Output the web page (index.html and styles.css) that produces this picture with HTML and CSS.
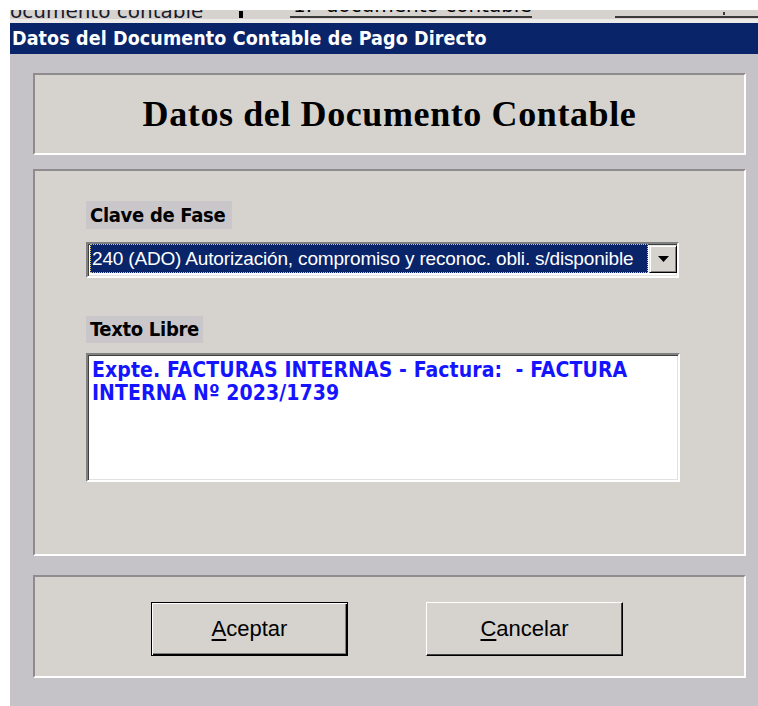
FILE: index.html
```html
<!DOCTYPE html>
<html lang="es">
<head>
<meta charset="utf-8">
<title>Datos del Documento Contable de Pago Directo</title>
<link rel="stylesheet" href="styles.css">
</head>
<body>
<div class="screen">
  <div class="backdrop">
    <div class="back-row">
      <span class="back-text">ocumento contable</span>
      <span class="back-mark"></span>
      <span class="back-field"><span class="back-field-text">1.- documento contable</span></span>
      <span class="back-field back-field-wide"><span class="back-tick"></span></span>
    </div>
  </div>

  <div class="dialog">
    <div class="titlebar">Datos del Documento Contable de Pago Directo</div>

    <div class="client">
      <div class="panel panel-head">
        <h1 class="head-title">Datos del Documento Contable</h1>
      </div>

      <div class="panel panel-form">
        <div class="field-label label-fase">Clave de Fase</div>
        <div class="combo">
          <div class="combo-value">240 (ADO) Autorización, compromiso y reconoc. obli. s/disponible</div>
          <div class="combo-btn">
            <svg width="11" height="6" viewBox="0 0 11 6"><path d="M0 0h11L5.5 6z" fill="#000"/></svg>
          </div>
        </div>

        <div class="field-label label-texto">Texto Libre</div>
        <div class="memo">Expte. FACTURAS INTERNAS - Factura:&nbsp; - FACTURA INTERNA Nº 2023/1739</div>
      </div>

      <div class="panel panel-actions">
        <button class="btn btn-default" type="button"><u>A</u>ceptar</button>
        <button class="btn" type="button"><u>C</u>ancelar</button>
      </div>
    </div>
  </div>
</div>
</body>
</html>
```

FILE: styles.css
```css
* {
  box-sizing: border-box;
}

html, body {
  margin: 0;
  padding: 0;
  background: #ffffff;
}

.screen {
  width: 758px;
  height: 706px;
  padding-left: 10px;
  background: #ffffff;
  display: flex;
  flex-direction: column;
  overflow: hidden;
}

/* window partially visible behind the dialog */
.backdrop {
  padding-top: 10px;
  border-bottom: 4px solid #ecebea;
}

.back-row {
  height: 9px;
  background: #d6d3ce;
  display: flex;
  align-items: flex-end;
  overflow: hidden;
  font-family: "DejaVu Sans", sans-serif;
  font-size: 20px;
  line-height: 20px;
  color: #000;
}

.back-text {
  flex: 0 0 229px;
  margin-bottom: -2px;
  white-space: nowrap;
  color: #1a1a2e;
}

.back-mark {
  flex: 0 0 4px;
  height: 7px;
  margin-bottom: 1px;
  background: #000;
}

.back-field {
  flex: 0 0 227px;
  margin-left: 47px;
  margin-bottom: 1px;
  padding-bottom: 1px;
  padding-left: 3px;
  border-bottom: 2px solid #3a3a3a;
  white-space: nowrap;
}

.back-field-wide {
  flex: 1 1 auto;
  margin-left: 83px;
  display: flex;
  align-items: flex-end;
  height: 6px;
}

.back-tick {
  width: 2px;
  height: 3px;
  margin-left: 105px;
  background: #3a3a3a;
}

/* dialog */
.dialog {
  flex: 1;
  background: #c5c3c7;
  display: flex;
  flex-direction: column;
}

.titlebar {
  height: 31px;
  padding-left: 2px;
  background: #0a246a;
  color: #ffffff;
  font-family: "DejaVu Sans Condensed", "DejaVu Sans", sans-serif;
  font-stretch: condensed;
  font-weight: bold;
  font-size: 19.5px;
  letter-spacing: 0.1px;
  line-height: 31px;
  white-space: nowrap;
}

.client {
  padding: 19px 12px 0 23px;
  display: flex;
  flex-direction: column;
}

.panel {
  background: #d6d3ce;
  border: 2px solid;
  border-color: #8e8c8c #ffffff #ffffff #8e8c8c;
}

.panel-head {
  height: 82px;
  display: flex;
  align-items: center;
  justify-content: center;
}

.head-title {
  margin: 0;
  font-family: "Liberation Serif", "Times New Roman", serif;
  font-weight: bold;
  font-size: 36px;
  letter-spacing: 0.6px;
  line-height: 40px;
  color: #000;
}

.panel-form {
  margin-top: 14px;
  height: 387px;
  padding: 30px 0 0 51px;
}

.field-label {
  height: 28px;
  padding-left: 4px;
  background: #cac7ca;
  font-family: "DejaVu Sans Condensed", "DejaVu Sans", sans-serif;
  font-stretch: condensed;
  font-weight: bold;
  font-size: 20px;
  letter-spacing: -0.3px;
  line-height: 28px;
  color: #000;
  white-space: nowrap;
}

.label-fase {
  width: 146px;
}

.label-texto {
  width: 117px;
  height: 27px;
  line-height: 27px;
  margin-top: 38px;
}

.combo {
  margin-top: 13px;
  width: 593px;
  height: 36px;
  display: flex;
  gap: 1px;
  padding: 0 0 3px 2px;
  background: #ffffff;
  border: 2px solid;
  border-color: #808080 #ffffff #ffffff #808080;
  box-shadow: inset 1px 1px 0 #404040, inset -1px -1px 0 #e4e2de;
}

.combo-value {
  flex: 1;
  background: #0a246a;
  outline: 1px dotted #d9c46a;
  outline-offset: -1px;
  padding-left: 2px;
  color: #ffffff;
  font-family: "Liberation Sans", Arial, sans-serif;
  font-size: 19px;
  letter-spacing: -0.17px;
  line-height: 30px;
  white-space: nowrap;
  overflow: hidden;
}

.combo-btn {
  flex: 0 0 28px;
  margin-top: 1px;
  display: flex;
  align-items: center;
  justify-content: center;
  background: #d6d3ce;
  border: 1px solid;
  border-color: #e8e6e2 #000000 #000000 #e8e6e2;
  box-shadow: inset 1px 1px 0 #ffffff, inset -1px -1px 0 #808080;
}

.memo {
  margin-top: 10px;
  width: 594px;
  height: 129px;
  padding: 4px 40px 4px 4px;
  background: #ffffff;
  border: 2px solid;
  border-color: #808080 #ffffff #ffffff #808080;
  box-shadow: inset 1px 1px 0 #404040, inset -1px -1px 0 #e4e2de;
  color: #1414ff;
  font-family: "DejaVu Sans Condensed", "DejaVu Sans", sans-serif;
  font-stretch: condensed;
  font-weight: bold;
  font-size: 21px;
  letter-spacing: 0.1px;
  line-height: 23px;
}

.panel-actions {
  margin-top: 19px;
  height: 103px;
  display: flex;
  align-items: flex-start;
  gap: 78px;
  padding: 25px 0 0 116px;
}

.btn {
  width: 197px;
  height: 54px;
  margin: 0;
  padding: 0;
  background: #d6d3ce;
  border: 1px solid;
  border-color: #ffffff #000000 #000000 #ffffff;
  box-shadow: inset -1px -1px 0 #404040;
  font-family: "Liberation Sans", Arial, sans-serif;
  font-size: 22px;
  color: #000;
  cursor: default;
}

.btn u {
  text-underline-offset: 3px;
}

.btn-default {
  border-color: #000000;
  box-shadow: inset 1px 1px 0 #ffffff, inset -1px -1px 0 #000000, inset -2px -2px 0 #808080;
}
```
